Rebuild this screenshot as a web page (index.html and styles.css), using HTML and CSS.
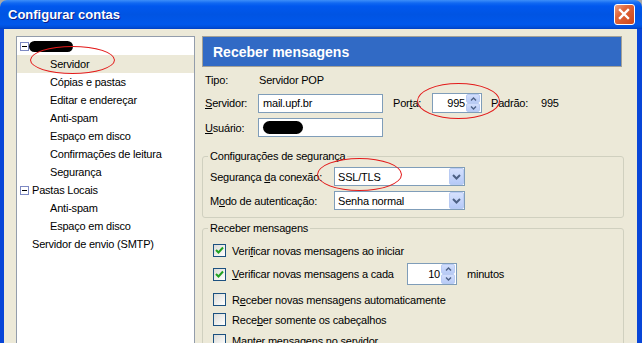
FILE: index.html
```html
<!DOCTYPE html>
<html>
<head>
<meta charset="utf-8">
<title>Configurar contas</title>
<link rel="stylesheet" href="styles.css">
</head>
<body>
<div class="window">
  <div class="titlebar">
    <span class="title">Configurar contas</span>
    <div class="close"><svg width="19" height="19" viewBox="0 0 19 19"><path d="M5 5L13 13M13 5L5 13" stroke="#fff" stroke-width="2.4" stroke-linecap="square"/></svg></div>
  </div>
  <div class="frame">
    <div class="tree">
      <div class="row lvl"><span class="toggle"></span><span class="blob"></span></div>
      <div class="row sub selected">Servidor</div>
      <div class="row sub">Cópias e pastas</div>
      <div class="row sub">Editar e endereçar</div>
      <div class="row sub">Anti-spam</div>
      <div class="row sub">Espaço em disco</div>
      <div class="row sub">Confirmações de leitura</div>
      <div class="row sub">Segurança</div>
      <div class="row lvl"><span class="toggle gap"></span>Pastas Locais</div>
      <div class="row sub">Anti-spam</div>
      <div class="row sub">Espaço em disco</div>
      <div class="row nob">Servidor de envio (SMTP)</div>
    </div>
    <div class="panel">
      <div class="header">Receber mensagens</div>
      <div class="frow r-tipo"><span class="lbl">Tipo:</span><span class="val-plain">Servidor POP</span></div>
      <div class="frow r-serv">
        <span class="lbl"><u>S</u>ervidor:</span>
        <div class="textbox">mail.upf.br</div>
        <span class="lbl-porta">Por<u>t</u>a:</span>
        <div class="spinner"><span class="spin-val">995</span><span class="spin"><span class="sb"><svg width="7" height="4" viewBox="0 0 7 4"><polyline points="1,3.5 3.5,1 6,3.5" fill="none" stroke="#4d6185" stroke-width="1.4"/></svg></span><span class="sb"><svg width="7" height="4" viewBox="0 0 7 4"><polyline points="1,0.5 3.5,3 6,0.5" fill="none" stroke="#4d6185" stroke-width="1.4"/></svg></span></span></div>
        <span class="lbl-padrao">Padrão:</span><span>995</span>
      </div>
      <div class="frow r-user">
        <span class="lbl"><u>U</u>suário:</span>
        <div class="textbox"><span class="blob small"></span></div>
      </div>
      <fieldset class="group g1">
        <legend>Configurações de segurança</legend>
        <div class="grow g1r1"><span class="glbl">Segurança <u>d</u>a conexão:</span><div class="select"><span class="sel-text">SSL/TLS</span><span class="dd"><svg width="9" height="6" viewBox="0 0 9 6"><polyline points="1,1 4.5,4.5 8,1" fill="none" stroke="#4d6185" stroke-width="2"/></svg></span></div></div>
        <div class="grow g1r2"><span class="glbl">M<u>o</u>do de autenticação:</span><div class="select"><span class="sel-text">Senha normal</span><span class="dd"><svg width="9" height="6" viewBox="0 0 9 6"><polyline points="1,1 4.5,4.5 8,1" fill="none" stroke="#4d6185" stroke-width="2"/></svg></span></div></div>
      </fieldset>
      <fieldset class="group g2">
        <legend>Receber mensagens</legend>
        <div class="crow c1"><span class="cb"><svg width="11" height="11" viewBox="0 0 11 11"><polyline points="2,5 4.5,7.5 9,2.5" fill="none" stroke="#21a121" stroke-width="2"/></svg></span><span>Veri<u>f</u>icar novas mensagens ao iniciar</span></div>
        <div class="crow c2"><span class="cb"><svg width="11" height="11" viewBox="0 0 11 11"><polyline points="2,5 4.5,7.5 9,2.5" fill="none" stroke="#21a121" stroke-width="2"/></svg></span><span class="c2lbl"><u>V</u>erificar novas mensagens a cada</span>
          <div class="spinner tall"><span class="spin-val">10</span><span class="spin"><span class="sb"><svg width="7" height="4" viewBox="0 0 7 4"><polyline points="1,3.5 3.5,1 6,3.5" fill="none" stroke="#4d6185" stroke-width="1.4"/></svg></span><span class="sb"><svg width="7" height="4" viewBox="0 0 7 4"><polyline points="1,0.5 3.5,3 6,0.5" fill="none" stroke="#4d6185" stroke-width="1.4"/></svg></span></span></div>
          <span class="minutos">minutos</span></div>
        <div class="crow c3"><span class="cb"></span><span>R<u>e</u>ceber novas mensagens automaticamente</span></div>
        <div class="crow c4"><span class="cb"></span><span>Rece<u>b</u>er somente os cabeçalhos</span></div>
        <div class="crow c5"><span class="cb"></span><span>Ma<u>n</u>ter mensagens no servidor</span></div>
      </fieldset>
    </div>
  </div>
  <div class="mark m1"></div>
  <div class="mark m2"></div>
  <div class="mark m3"></div>
</div>
</body>
</html>
```

FILE: styles.css
```css
* { box-sizing: border-box; }
html, body { margin: 0; padding: 0; }
body {
  width: 642px;
  height: 343px;
  overflow: hidden;
  background: #a9a9a9;
  font-family: "Liberation Sans", Arial, sans-serif;
  font-size: 11px;
  color: #000;
}
.window {
  position: relative;
  height: 343px;
  display: flex;
  flex-direction: column;
  border-radius: 7px 7px 0 0;
  overflow: hidden;
}
.titlebar {
  flex: none;
  height: 29px;
  display: flex;
  align-items: center;
  justify-content: space-between;
  padding: 0 7px 0 8px;
  background: linear-gradient(#3d8ff9 0, #1169f2 3px, #0058ee 6px, #0054e3 50%, #0058ec 84%, #0050db 93%, #0040c5 100%);
}
.title {
  color: #fff;
  font-weight: bold;
  font-size: 13px;
  text-shadow: 1px 1px 0 #0c1f8c;
}
.close {
  width: 21px;
  height: 21px;
  border: 1px solid #fff;
  border-radius: 3px;
  background: linear-gradient(135deg, #eea184 0%, #e0673b 35%, #cc4519 100%);
  display: flex;
  align-items: center;
  justify-content: center;
}
.frame {
  flex: 1;
  display: flex;
  align-items: stretch;
  background: #ece9d8;
  border-left: 4px solid #0846d8;
  border-right: 5px solid #0846d8;
  padding: 7px 13px 0 12px;
  letter-spacing: -0.2px;
}
.tree {
  flex: none;
  width: 179px;
  background: #fff;
  border: 1px solid #939dab;
  border-bottom: none;
}
.row {
  height: 18px;
  display: flex;
  align-items: center;
  white-space: nowrap;
}
.row.sub { padding-left: 33px; }
.row.lvl { padding-left: 3px; }
.row.nob { padding-left: 15px; }
.row.selected { background: #ece9d8; }
.toggle {
  flex: none;
  width: 9px;
  height: 9px;
  border: 1px solid #7d89c3;
  background: #fff;
  display: flex;
  align-items: center;
  justify-content: center;
}
.toggle::after {
  content: "";
  width: 5px;
  height: 1px;
  background: #000;
}
.toggle.gap { margin-right: 3px; }
.blob {
  width: 44px;
  height: 11px;
  background: #000;
  border-radius: 6px;
}
.blob.small {
  width: 40px;
  height: 13px;
  border-radius: 7px;
}
.panel {
  flex: none;
  width: 422px;
  margin-left: 7px;
  display: flex;
  flex-direction: column;
}
.header {
  flex: none;
  width: 420px;
  height: 31px;
  background: #316ac5;
  border: 1px solid #a3a197;
  color: #fff;
  font-weight: bold;
  font-size: 14px;
  letter-spacing: 0;
  padding-left: 10px;
  display: flex;
  align-items: center;
}
.frow {
  display: flex;
  align-items: center;
  padding-left: 3px;
  white-space: nowrap;
}
.r-tipo { height: 16px; margin-top: 5px; }
.r-serv { height: 20px; margin-top: 5px; }
.r-user { height: 19px; margin-top: 5px; }
.lbl { width: 53px; flex: none; }
.val-plain { padding-left: 1px; }
.textbox {
  width: 125px;
  height: 19px;
  border: 1px solid #7f9db9;
  background: #fff;
  padding-left: 4px;
  display: flex;
  align-items: center;
}
.lbl-porta { width: 39px; margin-left: 10px; flex: none; }
.lbl-padrao { width: 50px; margin-left: 9px; flex: none; }
.spinner {
  flex: none;
  width: 50px;
  height: 20px;
  border: 1px solid #7f9db9;
  background: #fff;
  display: flex;
}
.spinner.tall { height: 22px; }
.spin-val {
  flex: 1;
  text-align: right;
  padding-right: 1px;
  display: flex;
  align-items: center;
  justify-content: flex-end;
}
.spin {
  width: 14px;
  margin-right: 1px;
  display: flex;
  flex-direction: column;
}
.sb {
  flex: 1;
  border: 1px solid #b9cbf3;
  border-radius: 2px;
  background: linear-gradient(#d2defc, #b8cbf6);
  display: flex;
  align-items: center;
  justify-content: center;
}
.group {
  width: 422px;
  min-width: 0;
  margin: 13px 0 0 0;
  padding: 0 8px 7px 7px;
  border: 1px solid #d0d0bf;
  border-radius: 3px;
}
.group legend {
  padding: 0 2px;
  margin-left: -2px;
  line-height: 13px;
  height: 13px;
  color: #000;
}
.g2 { margin-top: 4px; padding-bottom: 20px; }
.grow {
  display: flex;
  align-items: center;
  height: 19px;
  white-space: nowrap;
}
.g1r1 { margin-top: 4px; }
.g1r2 { margin-top: 5px; }
.glbl { width: 124px; flex: none; }
.select {
  width: 131px;
  height: 19px;
  border: 1px solid #7f9db9;
  background: #fff;
  display: flex;
  align-items: stretch;
  padding-left: 3px;
}
.sel-text { flex: 1; display: flex; align-items: center; }
.dd {
  width: 15px;
  border: 1px solid #b9cbf3;
  border-radius: 2px;
  background: linear-gradient(#d6e1fd, #b5c9f7);
  display: flex;
  align-items: center;
  justify-content: center;
}
.crow {
  display: flex;
  align-items: center;
  margin-left: 3px;
  white-space: nowrap;
  height: 13px;
}
.c1 { margin-top: 9px; }
.c2 { margin-top: 6px; height: 22px; }
.c3 { margin-top: 8px; }
.c4 { margin-top: 7px; }
.c5 { margin-top: 8px; }
.cb {
  flex: none;
  width: 13px;
  height: 13px;
  border: 1px solid #1c5180;
  background: linear-gradient(135deg, #dcdcd7, #ffffff);
  margin-right: 6px;
  display: flex;
  align-items: center;
  justify-content: center;
}
.c2lbl { width: 175px; flex: none; }
.minutos { margin-left: 10px; }
.mark {
  position: absolute;
  border: 1.5px solid #e31b1b;
  border-radius: 50%;
}
.m1 { left: 30px; top: 46px; width: 85px; height: 28px; }
.m2 { left: 417px; top: 83px; width: 83px; height: 36px; }
.m3 { left: 317px; top: 158px; width: 85px; height: 33px; }
```
